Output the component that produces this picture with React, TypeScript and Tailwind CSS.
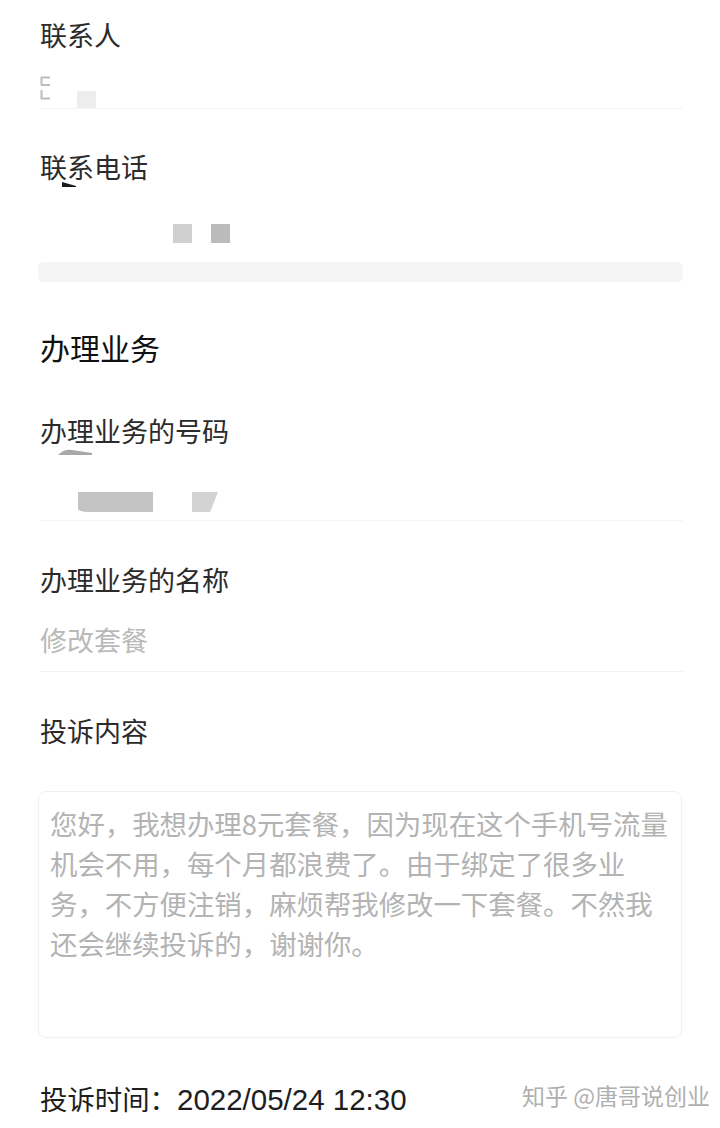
import React from 'react';

const font = { fontFamily: '"Noto Sans CJK SC", "Noto Sans", sans-serif' };

const Label: React.FC<{ text: string; className?: string }> = ({ text, className = '' }) => (
    <div className={`h-[36px] leading-[36px] text-[27px] text-[#2b2b2b] ${className}`}>{text}</div>
);

export default function App() {
    return (
        <div className="w-[720px] h-[1128px] bg-white overflow-hidden" style={font}>
            <div className="pl-[40px] pr-[37px]">
                {/* 联系人 */}
                <Label text="联系人" className="mt-[17px]" />
                <div className="h-[56px] border-b border-[#f4f4f4] relative">
                    <svg className="absolute left-0 top-[23px]" width="12" height="24" viewBox="0 0 12 24">
                        <path d="M1 1.5h9M1.5 1v8M1 9h9M1.5 14v9M1 22.5h9" stroke="#bdbdbd" strokeWidth="2" fill="none" />
                    </svg>
                    <div className="absolute left-[37px] top-[38px] w-[19px] h-[17px] bg-[#ededed]" />
                </div>

                {/* 联系电话 */}
                <div className="relative">
                    <Label text="联系电话" className="mt-[40px]" />
                    <svg className="absolute left-[22px] top-[33px]" width="14" height="5" viewBox="0 0 14 5">
                        <path d="M0 0 L14 4 L14 5 L0 5 Z" fill="#1a1a1a" />
                    </svg>
                </div>
                <div className="h-[77px] relative">
                    <div className="absolute left-[133px] top-[39px] w-[19px] h-[19px] bg-[#d0d0d0]" />
                    <div className="absolute left-[171px] top-[39px] w-[19px] h-[19px] bg-[#bbbbbb]" />
                </div>
            </div>
            <div className="ml-[38px] mr-[37px] h-[20px] rounded-[6px] bg-[#f5f5f5]" />

            <div className="pl-[40px] pr-[37px]">
                {/* 办理业务 */}
                <div className="mt-[45px] h-[40px] leading-[40px] text-[30px] text-[#111]">办理业务</div>

                <Label text="办理业务的号码" className="mt-[46px]" />
                <div className="h-[72px] border-b border-[#f4f4f4] relative">
                    <svg className="absolute left-[18px] top-[0px]" width="34" height="7" viewBox="0 0 34 7">
                        <path d="M0 6 Q6 0 14 1 L34 4 L34 6 Z" fill="#a8a8a8" />
                    </svg>
                    <div className="absolute left-[38px] top-[43px] w-[75px] h-[20px] bg-[#c4c4c4] rounded-bl-[10px_3px]" />
                    <div className="absolute left-[152px] top-[43px] w-[26px] h-[20px] bg-[#d3d3d3] [clip-path:polygon(0_0,100%_0,70%_100%,0_100%)]" />
                </div>

                <Label text="办理业务的名称" className="mt-[41px]" />
                <div className="mt-[24px] h-[36px] leading-[36px] text-[27px] text-[#b9b9b9]">修改套餐</div>
                <div className="mt-[13px] border-b border-[#f2f2f2]" />

                <Label text="投诉内容" className="mt-[41px]" />
            </div>

            <div className="ml-[38px] mr-[38px] mt-[42px] h-[247px] rounded-[8px] border border-[#f1f1f1] px-[11px] pt-[11px]">
                <div className="text-[27.4px] leading-[40px] text-[#b3b3b3] whitespace-nowrap">
                    <div>您好，我想办理8元套餐，因为现在这个手机号流量</div>
                    <div>机会不用，每个月都浪费了。由于绑定了很多业</div>
                    <div>务，不方便注销，麻烦帮我修改一下套餐。不然我</div>
                    <div>还会继续投诉的，谢谢你。</div>
                </div>
            </div>

            <div className="mt-[42px] pl-[40px] pr-[10px] flex items-center justify-between">
                <div className="h-[36px] leading-[36px] text-[27.4px] text-[#1e1e1e] whitespace-nowrap">
                    投诉时间：<span className="text-[29.5px] font-['Liberation_Sans',sans-serif]">2022/05/24 12:30</span>
                </div>
                <div className="text-[23px] text-[#b0b0b0] whitespace-nowrap -mt-[6px]">知乎 @唐哥说创业</div>
            </div>
        </div>
    );
}
